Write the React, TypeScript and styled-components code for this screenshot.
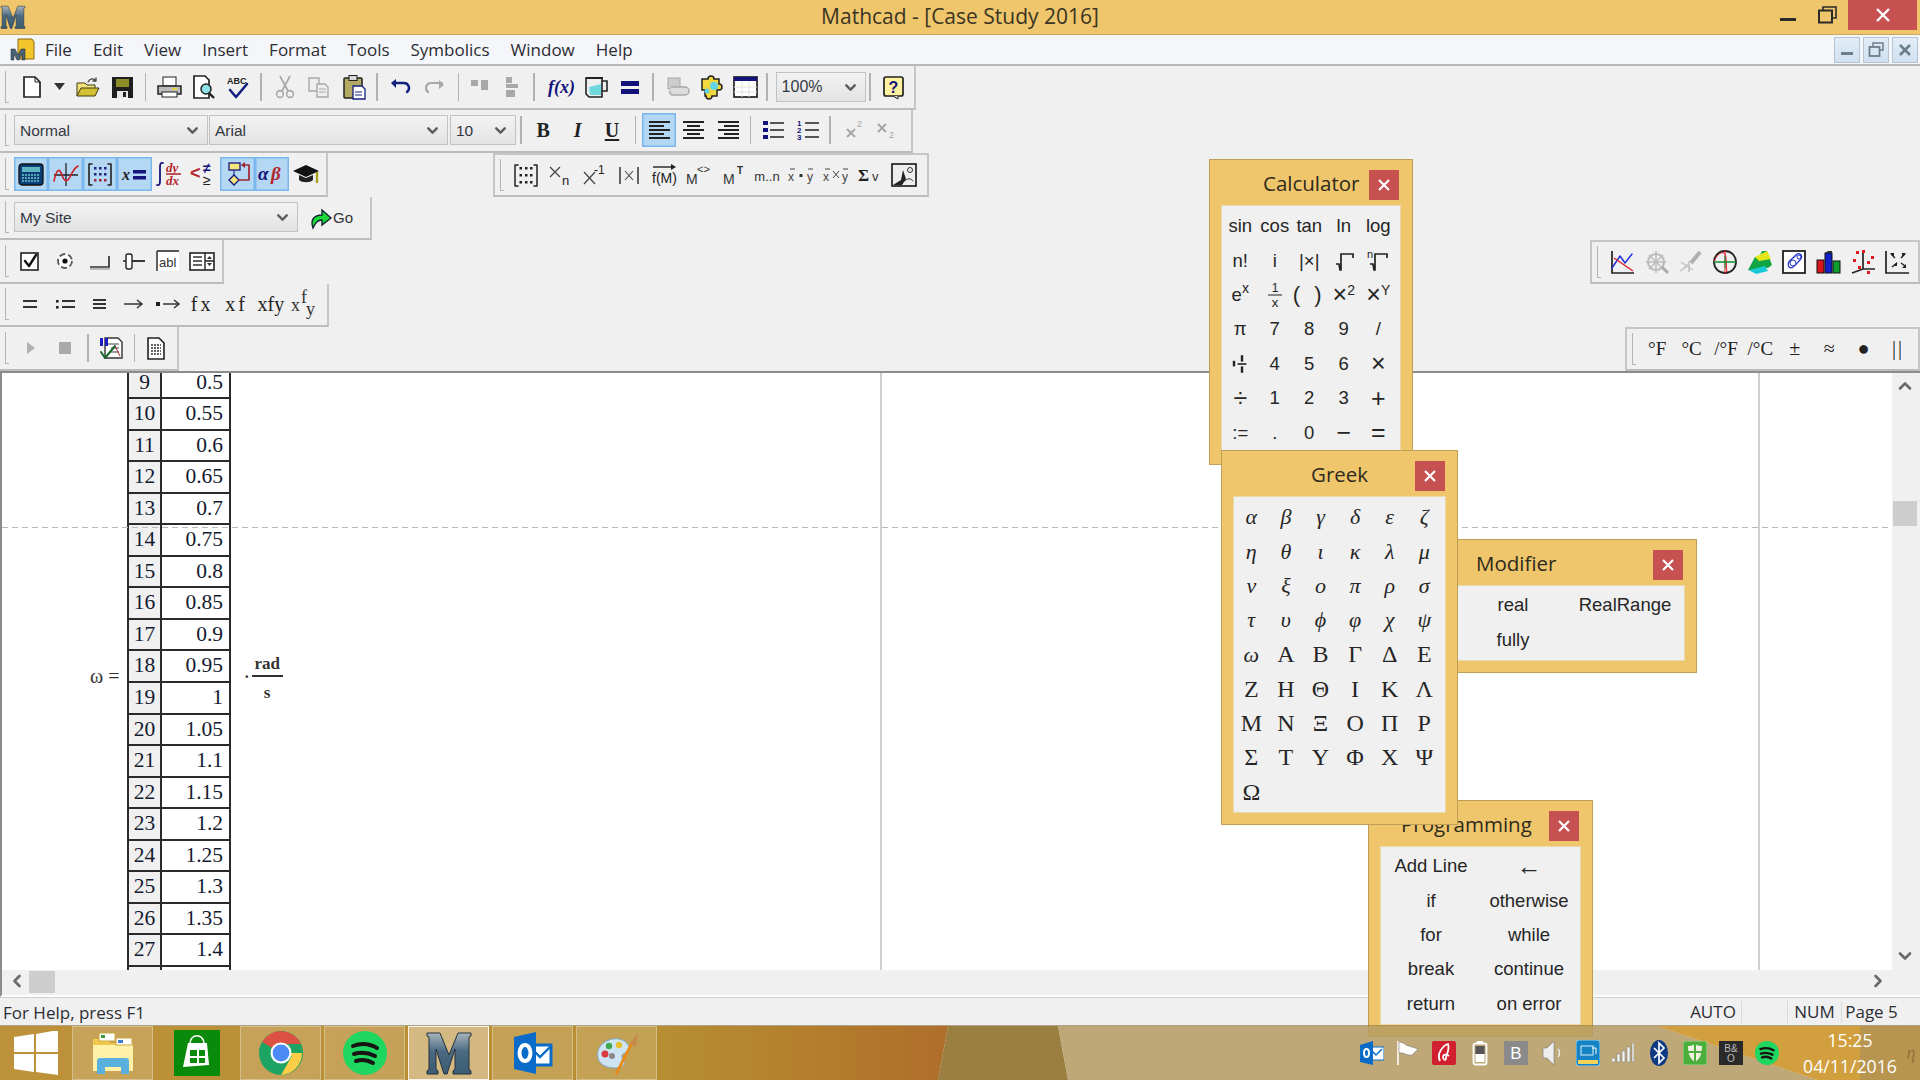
import React from "react";
import styled, { createGlobalStyle } from "styled-components";
import { ChevronDown, ChevronUp, ChevronLeft, ChevronRight } from "lucide-react";

const Global = createGlobalStyle`
  html, body { margin: 0; padding: 0; width: 1920px; height: 1080px; overflow: hidden; background: #f0f0f0; }
  #root { width: 1920px; height: 1080px; }
  * { box-sizing: border-box; }
`;

const UI = `"Open Sans", "Noto Sans", sans-serif`;
const SANS = `"Liberation Sans", Arial, sans-serif`;
const SERIF = `"Liberation Serif", "Times New Roman", serif`;

const Desktop = styled.div`
  position: relative; width: 1920px; height: 1080px; display: flex; flex-direction: column;
  background: #f0f0f0; overflow: hidden; font-family: ${SANS}; color: #222;
`;
const TitleBar = styled.header`
  height: 35px; flex: none; display: flex; align-items: center; justify-content: space-between;
  background: #efc66b; border-bottom: 1px solid #c9a75a; position: relative;
`;
const TitleText = styled.div`
  position: absolute; left: 0; right: 0; top: 2px; text-align: center; font: 21px ${UI}; color: #3a3424;
`;
const WinControls = styled.div`display: flex; align-items: flex-start; height: 100%; margin-left: auto; position: relative; padding-right: 3px;`;
const WinBtn = styled.div<{ $w: number; $red?: boolean }>`
  width: ${p => p.$w}px; height: 30px; display: flex; align-items: center; justify-content: center;
  background: ${p => (p.$red ? "#c75050" : "transparent")};
`;
const MenuBar = styled.nav`
  height: 31px; flex: none; display: flex; align-items: center; background: #f5f6f9; border-bottom: 2px solid #b8b8b8;
  padding-left: 10px; font: 17px ${UI}; color: #2c2c34;
`;
const MenuItems = styled.div`display: flex; gap: 21px; margin-left: 10px;`;
const MdiGroup = styled.div`display: flex; gap: 3px; margin-left: auto; margin-right: 2px;`;
const MdiBtn = styled.div`
  width: 26px; height: 26px; display: flex; align-items: center; justify-content: center;
  background: linear-gradient(#e3edf7, #cfe0f0); border: 1px solid #b5c4d2;
`;
const Row = styled.div`display: flex; height: 43.5px; flex: none;`;
const Toolbar = styled.div<{ $w: number; $boxed?: boolean; $ml?: string }>`
  display: flex; align-items: center; height: 100%; width: ${p => p.$w}px; flex: none;
  margin-left: ${p => p.$ml || "0"};
  border-right: 2px solid #c6c6c6; border-bottom: 2px solid #bcbcbc;
  ${p => (p.$boxed ? "border-top: 2px solid #c6c6c6; border-left: 2px solid #c6c6c6;" : "")}
`;
const Gripper = styled.span`
  width: 4px; height: 32px; flex: none; margin: 0 4px 0 5px; border-left: 1.5px solid #b4b4b4; border-bottom: 1.5px solid #b4b4b4;
`;
const Btn = styled.div<{ $w?: number; $on?: boolean; $ml?: number }>`
  width: ${p => p.$w ?? 34.4}px; height: 34px; flex: none; display: flex; align-items: center; justify-content: center;
  margin-left: ${p => p.$ml ?? 0}px;
  background: ${p => (p.$on ? "#b4d7f4" : "transparent")};
  box-shadow: ${p => (p.$on ? "inset 0 0 0 1.5px #79b7ee" : "none")};
`;
const Sep = styled.span<{ $w?: number }>`
  width: ${p => p.$w ?? 12.6}px; height: 28px; flex: none; display: flex; justify-content: center;
  &::after { content: ""; width: 1.5px; height: 100%; background: #b2b2b2; }
`;
const IconSvg = styled.svg`width: 28px; height: 28px; display: block; flex: none; overflow: visible;`;
const Combo = styled.div<{ $w: number; $ml?: number; $big?: boolean }>`
  width: ${p => p.$w}px; height: 30px; flex: none; margin-left: ${p => p.$ml ?? 0}px;
  display: flex; align-items: center; justify-content: space-between; padding: 1px 6px 0 5px;
  border: 1.5px solid #c2c2c2; background: linear-gradient(#f3f3f3, #e3e3e3);
  font: ${p => (p.$big ? 16 : 15.5)}px ${SANS}; color: #333842;
`;
const GoLabel = styled.span`font: 15px ${SANS}; color: #333; margin-left: -3px;`;
const SerifGlyph = styled.span<{ $b?: boolean; $i?: boolean; $s?: number; $ls?: number; $c?: string }>`
  font-family: ${SERIF}; font-size: ${p => p.$s ?? 19}px; font-weight: ${p => (p.$b ? 700 : 400)};
  font-style: ${p => (p.$i ? "italic" : "normal")}; letter-spacing: ${p => p.$ls ?? 0}px; color: ${p => p.$c ?? "#222"};
  white-space: pre;
`;
const UnderGlyph = styled(SerifGlyph)`text-decoration: underline; text-underline-offset: 2px;`;
const Workspace = styled.main`
  flex: 1; min-height: 0; display: flex; border-top: 2px solid #8c8c8c; border-left: 2px solid #8c8c8c; margin-top: 0;
`;
const Sheet = styled.div`flex: 1; position: relative; background: #fff; overflow: hidden;`;
const VScroll = styled.div`
  width: 28px; flex: none; background: #f0f0f0; display: flex; flex-direction: column; align-items: center; position: relative;
  color: #6b6b6b; padding: 3px 2px 4px 0;
`;
const VThumb = styled.div`width: 24px; height: 25px; background: #cdcdcd; margin-top: 105px;`;
const Spacer = styled.div`flex: 1;`;
const PageLine = styled.div<{ $x: number }>`position: absolute; top: 0; bottom: 0; left: ${p => p.$x}px; width: 2px; background: #cfcfcf;`;
const BreakLine = styled.div`
  position: absolute; left: 0; right: 0; top: 154px; height: 1px; z-index: 2;
  background: repeating-linear-gradient(90deg, #b9b9b9 0 6px, transparent 6px 10px);
`;
const Table = styled.div`
  position: absolute; left: 125px; top: -5px; display: grid; grid-template-columns: 33px 69px; grid-auto-rows: 31.55px;
  font: 21.5px ${SERIF}; color: #141a30; border-left: 2px solid #2b2b2b;
`;
const NumCell = styled.div`
  background: #f0f0f0; border-right: 2px solid #2b2b2b; border-bottom: 2px solid #2b2b2b; text-align: center; line-height: 29px;
`;
const ValCell = styled.div`
  background: #fff; border-right: 2px solid #2b2b2b; border-bottom: 2px solid #2b2b2b; text-align: right; padding-right: 6px; line-height: 29px;
`;
const OmegaLabel = styled.div`position: absolute; left: 88px; top: 292px; font: 20px ${SERIF}; color: #333; white-space: pre;`;
const Unit = styled.div`
  position: absolute; left: 242px; top: 278px; display: flex; align-items: center; gap: 2px; font: bold 17px ${SERIF}; color: #333;
`;
const Frac = styled.div`display: flex; flex-direction: column; align-items: center; width: 31px;`;
const FracTop = styled.div`border-bottom: 2px solid #333; width: 100%; text-align: center; height: 26px; line-height: 26px; margin-bottom: 5px;`;
const FracBot = styled.div`height: 22px; line-height: 22px;`;
const HScroll = styled.div`
  height: 27px; flex: none; background: #f0f0f0; border-left: 2px solid #8c8c8c; display: flex; align-items: flex-start; color: #6b6b6b; padding: 1px 32px 0 5px;
  border-bottom: 2px solid #fff; box-shadow: 0 1px 0 #d0d0d0;
`;
const HThumb = styled.div`width: 26px; height: 22px; background: #cdcdcd; margin-left: 2px; margin-top: 0;`;
const StatusBar = styled.footer`
  height: 28px; flex: none; display: flex; align-items: center; padding: 2px 19px 0 3px; font: 17px ${UI}; color: #2d2d35;
`;
const StatusCell = styled.div<{ $w: number; $first?: boolean }>`
  width: ${p => p.$w}px; height: 22px; line-height: 22px; text-align: center; border-left: ${p => (p.$first ? "none" : "1.5px solid #d8d8d8")};
  ${p => (p.$first ? "margin-left: auto;" : "")}
`;
const Taskbar = styled.footer`
  height: 55px; flex: none; position: relative; z-index: 10; display: flex; align-items: stretch; border-top: 1px solid rgba(120, 100, 50, 0.55);
`;
const Wallpaper = styled.svg`position: absolute; inset: 0; width: 100%; height: 100%; z-index: -1;`;
const StartCell = styled.div`width: 72px; flex: none; display: flex; align-items: center; justify-content: center;`;
const TaskButtons = styled.div`display: flex; gap: 3px; flex: none;`;
const TaskBtn = styled.div<{ $state?: "on" | "plain" | "active" }>`
  width: 81px; display: flex; align-items: center; justify-content: center;
  background: ${p => (p.$state === "active" ? "rgba(255,255,255,.38)" : p.$state === "plain" ? "transparent" : "rgba(255,255,255,.17)")};
  border: 1px solid ${p => (p.$state === "active" ? "rgba(255,255,255,.85)" : p.$state === "plain" ? "transparent" : "rgba(255,255,255,.3)")};
`;
const Tray = styled.div`margin-left: auto; display: flex; align-items: center;`;
const TrayIcon = styled.div`width: 35.9px; display: flex; justify-content: center; align-items: center; flex: none;`;
const Clock = styled.div`
  width: 104px; margin-left: 13px; text-align: center; color: #fff; font: 17.7px/26px ${UI};
`;
const Ghost = styled.div`width: 18px; text-align: center; color: rgba(110,85,40,.55); font: italic 18px ${SERIF};`;
const Palette = styled.section<{ $x: number; $y: number; $w: number; $h: number; $z: number }>`
  position: absolute; left: ${p => p.$x}px; top: ${p => p.$y}px; width: ${p => p.$w}px; height: ${p => p.$h}px; z-index: ${p => p.$z};
  background: #efc66b; border: 1.5px solid #bf9f55; padding: 0 11px 11px 11px; display: flex; flex-direction: column;
`;
const PalHead = styled.div`height: 45px; flex: none; display: flex; align-items: flex-start;`;
const PalTitle = styled.div<{ $ml: number }>`
  margin-left: ${p => p.$ml}px; margin-top: 9px; font: 20.5px/28px ${UI}; color: #2e2a1d; white-space: nowrap;
`;
const PalClose = styled.div<{ $mr: number }>`
  width: 30px; height: 30px; background: #c75050; margin-top: 10px; margin-left: auto; margin-right: ${p => p.$mr}px;
  display: flex; align-items: center; justify-content: center;
`;
const PalBody = styled.div<{ $cols: string; $pad: string; $end?: boolean }>`
  flex: 1; min-height: 0; background: #f0f0f0; border: 1px solid #e9d9ab; display: grid; grid-template-columns: ${p => p.$cols};
  grid-auto-rows: 34.4px; padding: ${p => p.$pad}; justify-content: ${p => (p.$end ? "end" : "start")}; overflow: hidden;
  font: 18.5px ${SANS}; color: #262626;
`;
const Cell = styled.div`display: flex; align-items: center; justify-content: center; white-space: nowrap;`;
const GreekLow = styled(Cell)`font: italic 22px ${SERIF};`;
const GreekUp = styled(Cell)`font: 24px ${SERIF};`;
const Sup = styled.sup`font-size: 14px; line-height: 0; vertical-align: 8px;`;
const Pair = styled.span`letter-spacing: 4px; font-size: 22px;`;
const BigOp = styled.span`font-size: 25px; line-height: 1;`;

const T: React.FC<{ x: number; y: number; s?: number; f?: string; c?: string; b?: boolean; i?: boolean; a?: string; children: React.ReactNode }> = ({ x, y, s = 12, f = SANS, c = "#333", b, i, a = "start", children }) => (
  <text x={x} y={y} fontSize={s} fontFamily={f} fill={c} fontWeight={b ? 700 : 400} fontStyle={i ? "italic" : "normal"} textAnchor={a as any}>{children}</text>
);

const DK = "#222", GY = "#a8a8a8", RD = "#b3262c";
const P = { fill: "none", strokeLinecap: "round" as const, strokeLinejoin: "round" as const };

const ICONS: Record<string, React.ReactNode> = {
  new: <><path d="M6 4h11l5 5v15H6z" fill="#fff" stroke={DK} strokeWidth="1.7" /><path d="M17 4v5h5" fill="none" stroke={DK} /></>,
  open: <><path d="M3 23V10h8l2 2h8v4" fill="#f6e27c" stroke="#3a3a10" /><path d="M3 23l4-8h18l-4 8z" fill="#d4c032" stroke="#3a3a10" /><path d="M14 9c2-4 6-4 8-1m0 0v-3m0 3h-3" {...P} stroke="#444" strokeWidth="1.3" /></>,
  save: <><rect x="4" y="4" width="21" height="21" fill="#1f1f1f" /><rect x="8" y="6" width="13" height="8" fill="#8e8e28" /><rect x="9" y="18" width="11" height="7" fill="#e8e8e8" /><rect x="15" y="19" width="3" height="5" fill="#222" /></>,
  print: <><rect x="8" y="4" width="13" height="9" fill="#fff" stroke={DK} /><path d="M3 13h23v8H3z" fill="#bbb" stroke={DK} strokeWidth="1.5" /><rect x="7" y="19" width="15" height="5" fill="#fff" stroke={DK} /><rect x="17" y="15" width="5" height="2" fill="#e6d23a" /></>,
  preview: <><path d="M5 3h11l4 4v18H5z" fill="#fff" stroke={DK} strokeWidth="1.7" /><circle cx="17" cy="16" r="5" fill="#8fe3e8" stroke="#222" strokeWidth="1.5" /><path d="M20 20l5 5" stroke="#222" strokeWidth="2.4" /></>,
  spell: <><T x={3} y={11} s={9} b c="#222">ABC</T><path d="M6 17l6 7 11-13" {...P} stroke="#15207e" strokeWidth="2.6" /></>,
  cut: <><path d="M9 3l8 15M19 3l-8 15" stroke={GY} strokeWidth="1.7" /><circle cx="9" cy="21" r="3.4" fill="none" stroke={GY} strokeWidth="1.6" /><circle cx="19" cy="21" r="3.4" fill="none" stroke={GY} strokeWidth="1.6" /></>,
  copy: <><path d="M4 5h10v13H4z" fill="#eee" stroke={GY} strokeWidth="1.4" /><path d="M12 11h8l3 3v10H12z" fill="#eee" stroke={GY} strokeWidth="1.4" /><path d="M14 16h7M14 19h7" stroke={GY} /></>,
  paste: <><rect x="4" y="5" width="18" height="20" rx="1" fill="#b3ab63" stroke={DK} strokeWidth="1.5" /><rect x="9" y="2.5" width="8" height="5" fill="#d8d8d8" stroke={DK} /><path d="M13 13h9l3 3v10H13z" fill="#fff" stroke="#15207e" strokeWidth="1.3" /><path d="M15 19h7M15 22h7" stroke="#15207e" /></>,
  undo: <><path d="M7 10h11a5 5 0 0 1 3 9" {...P} stroke="#14207e" strokeWidth="2.4" /><path d="M10 6l-5 4 5 5z" fill="#14207e" /></>,
  redo: <><path d="M21 10H10a5 5 0 0 0-3 9" {...P} stroke={GY} strokeWidth="2.2" /><path d="M18 7l5 5-5 4z" fill={GY} /></>,
  atop: <><rect x="4" y="7" width="7" height="6" fill={GY} /><rect x="14" y="7" width="7" height="10" fill={GY} /></>,
  abot: <><rect x="9" y="4" width="6" height="6" fill={GY} /><rect x="9" y="11" width="12" height="4" fill={GY} /><rect x="9" y="17" width="9" height="7" fill={GY} /></>,
  fx: <T x={1} y={20} s={18} f={SERIF} b i c="#12127a">f(x)</T>,
  unit: <><path d="M5 5h16v19H8l-3-3z" fill="#eee" stroke={DK} strokeWidth="1.6" /><path d="M21 8h5v10h-5" fill="none" stroke={DK} strokeWidth="1.6" /><path d="M8 14l12-3v11H9z" fill="#6fd8dc" /><path d="M5 5h17" stroke={DK} strokeWidth="2" /></>,
  eq: <><rect x="5" y="8" width="18" height="5" fill="#12127a" /><rect x="5" y="16" width="18" height="5" fill="#12127a" /></>,
  comp: <><rect x="5" y="5" width="12" height="11" fill="#ccc" stroke={GY} /><path d="M8 14h14a3 3 0 0 1 0 8H10a3 3 0 0 1-3-4" fill="#ddd" stroke={GY} strokeWidth="1.5" /></>,
  puzzle: <><path d="M5 6h6a3 3 0 0 1 6 0h5v5a3 3 0 0 1 0 6h-2v6h-5a3 3 0 0 1-6 0H8v-6H5z" fill="#f2d83d" stroke={DK} strokeWidth="1.5" /><circle cx="17" cy="13" r="4" fill="#62d6e8" /><circle cx="10" cy="18" r="2.5" fill="#5fd0e0" /></>,
  cal: <><rect x="3" y="4" width="23" height="20" fill="#fff" stroke={DK} strokeWidth="1.7" /><rect x="3" y="4" width="23" height="4" fill="#12127a" /><path d="M3 14h23M3 19h23M11 8v16M18 8v16" stroke="#e2e2e2" /></>,
  help: <><rect x="5" y="4" width="19" height="19" rx="2" fill="#fff3a0" stroke={DK} strokeWidth="1.7" /><T x={14.5} y={20} s={16} b c="#12127a" a="middle">?</T><path d="M14 23l5 3v-3" fill="#ddd" stroke={DK} /></>,
  alL: <path d="M4 6h21M4 10h15M4 14h21M4 18h15M4 22h21" stroke={DK} strokeWidth="1.8" />,
  alC: <path d="M4 6h21M8 10h13M4 14h21M8 18h13M4 22h21" stroke={DK} strokeWidth="1.8" />,
  alR: <path d="M4 6h21M10 10h15M4 14h21M10 18h15M4 22h21" stroke={DK} strokeWidth="1.8" />,
  bul: <><rect x="4" y="5" width="5" height="4" fill="#12127a" /><rect x="4" y="12" width="5" height="4" fill="#12127a" /><rect x="4" y="19" width="5" height="4" fill="#12127a" /><path d="M11 7h14M11 14h14M11 21h14" stroke={DK} strokeWidth="1.5" /></>,
  num: <><T x={3} y={10} s={8} b c="#12127a">1</T><T x={3} y={17} s={8} b c="#12127a">2</T><T x={3} y={24} s={8} b c="#12127a">3</T><path d="M11 7h14M11 14h14M11 21h14" stroke={DK} strokeWidth="1.5" /></>,
  sup: <><path d="M8 13l8 8M16 13l-8 8" stroke={GY} strokeWidth="2" /><T x={18} y={11} s={9} c={GY}>2</T></>,
  sub: <><path d="M5 8l8 8M13 8l-8 8" stroke={GY} strokeWidth="2" /><T x={16} y={22} s={9} c={GY}>2</T></>,
  calc: <><rect x="2" y="4" width="24" height="21" rx="3" fill="#0c3f77" stroke="#111" strokeWidth="1.3" /><rect x="5" y="7" width="18" height="5" fill="#5fb8bf" /><path d="M5 15h18M5 18h18M5 21h18" stroke="#6fc6c9" strokeWidth="1.6" strokeDasharray="2 1" /></>,
  graph: <><path d="M14 3v23M2 15h24" stroke="#222" strokeWidth="1.3" /><path d="M2 21c3-14 6-12 8-6s5 8 8 2 4-9 8-11" {...P} stroke="#d01f28" strokeWidth="1.6" /></>,
  matrix: <><path d="M6 4H3v21h3M22 4h3v21h-3" {...P} stroke="#222" strokeWidth="1.6" /><g fill="#23237f"><rect x="8" y="7" width="2.5" height="2.5" /><rect x="13" y="7" width="2.5" height="2.5" /><rect x="18" y="7" width="2.5" height="2.5" /><rect x="8" y="13" width="2.5" height="2.5" /><rect x="13" y="13" width="2.5" height="2.5" /><rect x="18" y="13" width="2.5" height="2.5" /></g><g fill="#a02632"><rect x="8" y="19" width="2.5" height="2.5" /><rect x="13" y="19" width="2.5" height="2.5" /><rect x="18" y="19" width="2.5" height="2.5" /></g></>,
  evalx: <><T x={2} y={20} s={16} f={SERIF} b i c="#222">x</T><rect x="13" y="10" width="13" height="3.5" fill="#14147a" /><rect x="13" y="16" width="13" height="3.5" fill="#14147a" /></>,
  calculus: <><path d="M8 3c-3-1-3 2-3 5v12c0 3 0 6-3 5" {...P} stroke="#14147a" strokeWidth="1.8" /><T x={11} y={12} s={13} f={SERIF} i b c={RD}>dy</T><path d="M11 14h15" stroke={RD} strokeWidth="1.5" /><T x={11} y={25} s={13} f={SERIF} i b c={RD}>dx</T></>,
  bool: <><T x={1} y={19} s={18} b c={RD}>&lt;</T><T x={14} y={13} s={14} b c="#14147a">≠</T><T x={14} y={25} s={14} c="#222">≥</T></>,
  prog: <><rect x="5" y="3" width="11" height="7" fill="#f5e67a" stroke="#14147a" strokeWidth="1.3" /><path d="M10 10v5" stroke="#14147a" /><path d="M10 15l5 5-5 5-5-5z" fill="#f5e67a" stroke="#14147a" strokeWidth="1.3" /><path d="M15 20h10V5h-6" {...P} stroke="#a02632" strokeWidth="1.7" /><path d="M21 2l-4 3 4 3z" fill="#a02632" /></>,
  greek: <><T x={0} y={20} s={19} f={SERIF} b i c="#14147a">α</T><T x={13} y={20} s={19} f={SERIF} b i c="#b3262c">β</T></>,
  cap: <><path d="M1 11l13-6 13 6-13 6z" fill="#111" /><path d="M7 15v5c3 3 11 3 14 0v-5l-7 3z" fill="#222" /><path d="M25 12v11" stroke="#aaa01e" strokeWidth="2.4" /></>,
  dots: <><path d="M6 4H3v21h3M22 4h3v21h-3" {...P} stroke="#222" strokeWidth="1.5" /><g fill="#222"><rect x="7.5" y="6" width="2.5" height="2.5" /><rect x="13" y="6" width="2.5" height="2.5" /><rect x="18" y="6" width="2.5" height="2.5" /><rect x="7.5" y="13" width="2.5" height="2.5" /><rect x="13" y="13" width="2.5" height="2.5" /><rect x="18" y="13" width="2.5" height="2.5" /><rect x="7.5" y="20" width="2.5" height="2.5" /><rect x="13" y="20" width="2.5" height="2.5" /><rect x="18" y="20" width="2.5" height="2.5" /></g></>,
  xn: <><path d="M3 6l10 10M13 6L3 16" stroke="#444" strokeWidth="1.2" /><T x={15} y={24} s={13} c="#222">n</T></>,
  xinv: <><path d="M3 11l11 12M14 11L3 23" stroke="#444" strokeWidth="1.2" /><T x={13} y={13} s={12} c="#222">-1</T></>,
  absx: <><path d="M5 6v17M23 6v17" stroke="#333" strokeWidth="1.5" /><path d="M10 10l8 9M18 10l-8 9" stroke="#444" strokeWidth="1.1" /></>,
  vect: <><path d="M3 6h21" stroke="#222" strokeWidth="1.4" /><path d="M21 3l5 3-5 3z" fill="#222" /><T x={2} y={22} s={14} c="#222">f(M)</T></>,
  mang: <><T x={2} y={23} s={14} c="#333">M</T><T x={13} y={12} s={11} c="#333">&lt;&gt;</T></>,
  mt: <><T x={4} y={23} s={14} c="#333">M</T><T x={18} y={13} s={10} b c="#333">T</T></>,
  mn: <T x={14} y={20} s={13} c="#333" a="middle">m..n</T>,
  dot: <><T x={1} y={20} s={12} c="#444">x</T><path d="M3 8h5" stroke="#444" /><rect x="12.5" y="13" width="3" height="3" fill="#333" /><T x={20} y={20} s={12} c="#444">y</T><path d="M21 8h5" stroke="#444" /></>,
  cross: <><T x={1} y={20} s={12} c="#444">x</T><path d="M3 8h5" stroke="#444" /><path d="M11 10l6 7M17 10l-6 7" stroke="#444" /><T x={20} y={20} s={12} c="#444">y</T><path d="M21 8h5" stroke="#444" /></>,
  sumv: <><T x={2} y={20} s={17} f={SERIF} b c="#222">Σ</T><T x={16} y={20} s={13} c="#333">v</T></>,
  pic: <><rect x="2" y="3" width="24" height="22" fill="#eee" stroke="#222" strokeWidth="1.7" /><path d="M3 24l8-5 2-10 3 9-4 6z" fill="#222" /><circle cx="20" cy="9" r="2.5" fill="none" stroke="#333" /><path d="M15 20c2-3 6-3 8 0" {...P} stroke="#333" /></>,
  check: <><rect x="5" y="6" width="17" height="17" fill="#fff" stroke="#222" strokeWidth="1.6" /><path d="M9 14l4 5 7-11" {...P} stroke="#111" strokeWidth="2.4" /></>,
  radio: <><circle cx="14" cy="14" r="7" fill="#fff" stroke="#555" strokeDasharray="6 3" strokeWidth="1.8" /><circle cx="14" cy="14" r="2.6" fill="#111" /></>,
  button: <><path d="M5 20h19V9" fill="none" stroke="#333" strokeWidth="1.7" /><path d="M5 22h20" stroke="#888" /></>,
  slider: <><path d="M11 14h15" stroke="#222" strokeWidth="1.8" /><rect x="7" y="7" width="6" height="15" rx="2" fill="#fff" stroke="#222" strokeWidth="1.4" /><path d="M4 14h3" stroke="#222" strokeWidth="1.5" /></>,
  textbox: <><rect x="3" y="4" width="22" height="20" fill="#fff" /><path d="M3 4h22M3 4v20" stroke="#222" strokeWidth="1.4" /><T x={5} y={20} s={13} c="#333">abl</T></>,
  list: <><rect x="2" y="6" width="24" height="17" fill="#fff" stroke="#222" strokeWidth="1.6" /><path d="M5 10h9M5 14h9M5 18h9" stroke="#333" strokeWidth="1.5" /><path d="M17 6v17M17 14h9" stroke="#222" strokeWidth="1.4" /><path d="M19 12l2.5-3 2.5 3zM19 16l2.5 3 2.5-3z" fill="#333" /></>,
  eq2: <path d="M7 11h14M7 17h14" stroke="#333" strokeWidth="2" />,
  assign: <><path d="M11 11h13M11 17h13" stroke="#333" strokeWidth="2" /><rect x="5" y="10" width="2.6" height="2.6" fill="#222" /><rect x="5" y="16" width="2.6" height="2.6" fill="#222" /></>,
  equiv: <path d="M8 10h13M8 14h13M8 18h13" stroke="#333" strokeWidth="1.8" />,
  arrow: <><path d="M5 14h17" stroke="#333" strokeWidth="1.5" /><path d="M18 10l5 4-5 4" fill="none" stroke="#333" strokeWidth="1.5" /></>,
  darrow: <><rect x="2" y="12" width="4" height="4" fill="#222" /><path d="M9 14h15" stroke="#333" strokeWidth="1.5" /><path d="M20 10l5 4-5 4" fill="none" stroke="#333" strokeWidth="1.5" /></>,
  xfysup: <><T x={0} y={21} s={18} f={SERIF} c="#333">x</T><T x={10} y={13} s={18} f={SERIF} c="#333">f</T><T x={15} y={25} s={18} f={SERIF} c="#333">y</T></>,
  play: <path d="M11 8l8 6-8 6z" fill="#b0b0b0" />,
  stop: <rect x="8" y="8" width="12" height="12" fill="#a9a9a9" />,
  checkdoc: <><path d="M8 4h13l4 4v16H8z" fill="#fff" stroke="#333" strokeWidth="1.4" /><path d="M11 10h11M14 14h8M14 18h8" stroke="#444" /><rect x="3" y="4" width="3" height="8" fill="#1c1cc0" /><rect x="8" y="4" width="3" height="8" fill="#1c1cc0" /><path d="M4 18l4 6 10-12" {...P} stroke="#146a2e" strokeWidth="2" /><path d="M18 12l5 10" stroke="#b3262c" /></>,
  doc: <><path d="M6 4h11l5 5v16H6z" fill="#fff" stroke="#222" strokeWidth="1.6" /><path d="M9 11h10M9 14h10M9 17h10M9 20h10" stroke="#333" strokeWidth="1.4" strokeDasharray="2 1" /></>,
  g2d: <><path d="M4 3v22h22" fill="none" stroke="#222" strokeWidth="1.7" /><path d="M4 20l8-12 5 7 7-9" {...P} stroke="#1c2cd8" strokeWidth="1.4" /><path d="M6 10l19 13" stroke="#dd1f2a" strokeWidth="1.4" /></>,
  gpolar: <><circle cx="13" cy="14" r="8" fill="none" stroke="#bcbcbc" strokeWidth="2.2" /><path d="M3 14h20M13 3v22M6 7l14 14M20 7L6 21" stroke="#bcbcbc" strokeWidth="1.5" /><path d="M19 19l6 6" stroke="#aaa" strokeWidth="3" /></>,
  gsurf: <><path d="M3 23l9-6M12 24V13M4 14l12 8" stroke="#c0c0c0" strokeWidth="1.5" /><path d="M14 15l9-11" stroke="#b0b0b0" strokeWidth="4" /><path d="M6 20l5-4 3 5" fill="none" stroke="#ccc" /></>,
  gcirc: <><circle cx="14" cy="14" r="11" fill="none" stroke="#222" strokeWidth="1.8" /><path d="M3 14c3-9 9-11 11-8s1 14 2 18" fill="none" stroke="#dd1f2a" /><path d="M14 2v24" stroke="#dd1f2a" /><path d="M3 14h22" stroke="#0d8f2e" strokeWidth="1.5" /><path d="M14 8v12" stroke="#0d8f2e" /></>,
  g3d: <><path d="M2 22l7-13h4l3-6h5l5 14-4 3-6-1-3 5z" fill="#10a544" /><path d="M9 9l12-6 4 8-12 2z" fill="#e6e61e" /><path d="M3 22l16-4 3 5-12 3z" fill="#18c9d6" /></>,
  gcont: <><rect x="3" y="3" width="22" height="22" fill="#fff" stroke="#222" strokeWidth="1.8" /><path d="M9 19c-3-6 4-8 7-12s8 1 4 5-8 10-11 7z" fill="none" stroke="#2233c8" strokeWidth="1.3" /><circle cx="13" cy="15" r="3" fill="none" stroke="#2233c8" /><circle cx="19" cy="9" r="2" fill="none" stroke="#2233c8" /></>,
  gbar: <><rect x="2" y="12" width="7" height="13" fill="#d8151c" stroke="#111" /><rect x="10" y="5" width="7" height="20" fill="#1420c8" stroke="#111" /><rect x="18" y="13" width="7" height="12" fill="#0f9e2e" stroke="#111" /><path d="M10 5l3-2 4 0v2" fill="#333" /></>,
  gscat: <><path d="M14 4v17M3 25l11-4h12" fill="none" stroke="#222" strokeWidth="1.7" /><g fill="#e21622"><rect x="7" y="3" width="3" height="3" /><rect x="13" y="2" width="3" height="3" /><rect x="22" y="8" width="3" height="3" /><rect x="4" y="11" width="3" height="3" /><rect x="18" y="13" width="3" height="3" /><rect x="9" y="18" width="3" height="3" /><rect x="18" y="23" width="3" height="3" /></g></>,
  gvec: <><path d="M3 3v22h23" fill="none" stroke="#222" strokeWidth="1.7" /><path d="M8 6l4 4M22 6l-4 4M9 19l5-4M22 18l-4-3" stroke="#222" strokeWidth="1.4" /><path d="M7 5h4v4zM23 5h-4v4zM14 14v4h-4zM23 20h-4l4-4z" fill="#222" /></>,
};

const Ic: React.FC<{ n: string }> = ({ n }) => <IconSvg viewBox="0 0 28 28">{ICONS[n]}</IconSvg>;
const Tool: React.FC<{ n: string; on?: boolean; w?: number; ml?: number }> = ({ n, on, w, ml }) => (
  <Btn $on={on} $w={w} $ml={ml}><Ic n={n} /></Btn>
);
const Chev: React.FC = () => <ChevronDown size={17} strokeWidth={3.4} color="#5d5d5d" />;

const MLogo: React.FC<{ w: number; h: number }> = ({ w, h }) => (
  <svg width={w} height={h} viewBox="0 0 48 48">
    <defs><linearGradient id={`m${w}`} x1="0" y1="0" x2="0" y2="1"><stop offset="0" stopColor="#a9b4bc" /><stop offset=".45" stopColor="#4a6a82" /><stop offset="1" stopColor="#3c5c74" /></linearGradient></defs>
    <path d="M2 4h13l9 22 9-22h13v3l-2 1v32l2 2v3H28v-3l2-2V20l-8 25h-3l-8-25v20l2 2v3H2v-3l2-2V8L2 7z" fill={`url(#m${w})`} stroke="#24313c" strokeWidth="1" />
  </svg>
);

const CloseX: React.FC = () => (
  <svg width="14" height="14" viewBox="0 0 14 14"><path d="M2 2l10 10M12 2L2 12" stroke="#fff" strokeWidth="2.2" /></svg>
);
const Radical: React.FC<{ n?: boolean }> = ({ n }) => (
  <svg width="22" height="24" viewBox="0 0 22 24">
    {n && <text x="0" y="9" fontSize="11" fontFamily={SANS} fill="#222">n</text>}
    <path d="M3 15h3l1 6 1-0V5h12v4" fill="none" stroke="#222" strokeWidth="1.7" />
  </svg>
);
const Mixed: React.FC = () => (
  <svg width="16" height="22" viewBox="0 0 20 26"><rect x="1" y="9" width="3" height="7" fill="#222" /><rect x="11" y="2" width="3" height="8" fill="#222" /><rect x="7" y="12" width="11" height="2" fill="#222" /><rect x="11" y="16" width="3" height="8" fill="#222" /></svg>
);
const OneOverX: React.FC = () => (
  <svg width="18" height="28" viewBox="0 0 18 28"><text x="9" y="11" textAnchor="middle" fontSize="12" fontFamily={SANS} fill="#222">1</text><path d="M2 14h14" stroke="#222" /><text x="9" y="26" textAnchor="middle" fontSize="13" fontFamily={SANS} fill="#222">x</text></svg>
);

const Tw: React.FC<{ children: React.ReactNode; w?: number; h?: number; vb?: string }> = ({ children, w = 44, h = 44, vb = "0 0 44 44" }) => (
  <svg width={w} height={h} viewBox={vb}>{children}</svg>
);

const calcCells: React.ReactNode[] = [
  "sin", "cos", "tan", "ln", "log",
  "n!", "i", "|×|", <Radical />, <Radical n />,
  <span>e<Sup>x</Sup></span>, <OneOverX />, <Pair>( )</Pair>, <span><BigOp>×</BigOp><Sup>2</Sup></span>, <span><BigOp>×</BigOp><Sup>Y</Sup></span>,
  "π", "7", "8", "9", "/",
  <Mixed />, "4", "5", "6", <BigOp>×</BigOp>,
  <BigOp>÷</BigOp>, "1", "2", "3", <BigOp>+</BigOp>,
  ":=", ".", "0", <BigOp>−</BigOp>, <BigOp>=</BigOp>,
];
const greekLow = "α β γ δ ε ζ η θ ι κ λ μ ν ξ ο π ρ σ τ υ ϕ φ χ ψ ω".split(" ");
const greekUp = "Α Β Γ Δ Ε Ζ Η Θ Ι Κ Λ Μ Ν Ξ Ο Π Ρ Σ Τ Υ Φ Χ Ψ Ω".split(" ");
const progCells: React.ReactNode[] = ["Add Line", <BigOp>←</BigOp>, "if", "otherwise", "for", "while", "break", "continue", "return", "on error"];
const rows: [number, string][] = [[9,"0.5"],[10,"0.55"],[11,"0.6"],[12,"0.65"],[13,"0.7"],[14,"0.75"],[15,"0.8"],[16,"0.85"],[17,"0.9"],[18,"0.95"],[19,"1"],[20,"1.05"],[21,"1.1"],[22,"1.15"],[23,"1.2"],[24,"1.25"],[25,"1.3"],[26,"1.35"],[27,"1.4"]];

export default function App() {
  return (
    <Desktop>
      <Global />
      <TitleBar>
        <TitleText>Mathcad - [Case Study 2016]</TitleText>
        <MLogo w={26} h={26} />
        <WinControls>
          <WinBtn $w={36}><svg width="16" height="16"><rect y="11" width="16" height="3" fill="#2b2b2b" /></svg></WinBtn>
          <WinBtn $w={42}><svg width="19" height="18" viewBox="0 0 19 18"><path d="M5 4V1h13v11h-3" fill="none" stroke="#2b2b2b" strokeWidth="1.6" /><rect x="1" y="4.5" width="13" height="12" fill="none" stroke="#2b2b2b" strokeWidth="2" /></svg></WinBtn>
          <WinBtn $w={69} $red><svg width="16" height="16" viewBox="0 0 16 16"><path d="M2 2l12 12M14 2L2 14" stroke="#fff" strokeWidth="2.4" /></svg></WinBtn>
        </WinControls>
      </TitleBar>
      <MenuBar>
        <svg width="25" height="26" viewBox="0 0 25 26"><path d="M8 2h14l2 3v17H8z" fill="#f2c52c" stroke="#8a6a12" /><path d="M1 12h4l3 6 3-6h4v11h-3v-6l-3 6H7l-3-6v6H1z" fill="#4a6478" stroke="#222" strokeWidth=".5" /></svg>
        <MenuItems>{["File", "Edit", "View", "Insert", "Format", "Tools", "Symbolics", "Window", "Help"].map(m => <span key={m}>{m}</span>)}</MenuItems>
        <MdiGroup>
          <MdiBtn><svg width="14" height="14"><rect x="1" y="9" width="12" height="3" fill="#6c7d8c" /></svg></MdiBtn>
          <MdiBtn><svg width="16" height="16" viewBox="0 0 16 16"><path d="M5 4V1h10v7h-3" fill="none" stroke="#6c7d8c" strokeWidth="1.5" /><rect x="1.5" y="5" width="10" height="9" fill="none" stroke="#6c7d8c" strokeWidth="1.8" /></svg></MdiBtn>
          <MdiBtn><svg width="14" height="14" viewBox="0 0 14 14"><path d="M2 2l10 10M12 2L2 12" stroke="#6c7d8c" strokeWidth="2.6" /></svg></MdiBtn>
        </MdiGroup>
      </MenuBar>

      <Row>
        <Toolbar $w={916}>
          <Gripper />
          <Tool n="new" ml={2} />
          <Btn $w={21}><svg width="11" height="7"><path d="M0 0h11L5.5 7z" fill="#333" /></svg></Btn>
          <Tool n="open" /><Tool n="save" /><Sep />
          <Tool n="print" /><Tool n="preview" /><Tool n="spell" /><Sep />
          <Tool n="cut" /><Tool n="copy" /><Tool n="paste" /><Sep />
          <Tool n="undo" /><Tool n="redo" /><Sep />
          <Tool n="atop" w={32} /><Tool n="abot" w={28} /><Sep $w={19} />
          <Tool n="fx" /><Tool n="unit" /><Tool n="eq" /><Sep />
          <Tool n="comp" /><Tool n="puzzle" /><Tool n="cal" /><Sep $w={9} />
          <Combo $w={90} $ml={4} $big>100%<Chev /></Combo><Sep $w={9} />
          <Tool n="help" ml={1} />
        </Toolbar>
      </Row>
      <Row>
        <Toolbar $w={913}>
          <Gripper />
          <Combo $w={194} $ml={1}>Normal<Chev /></Combo>
          <Combo $w={239} $ml={1}>Arial<Chev /></Combo>
          <Combo $w={66} $ml={2}>10<Chev /></Combo>
          <Sep $w={10} />
          <Btn><SerifGlyph $b $s={20}>B</SerifGlyph></Btn>
          <Btn><SerifGlyph $b $i $s={20}>I</SerifGlyph></Btn>
          <Btn><UnderGlyph $b $s={20}>U</UnderGlyph></Btn>
          <Sep />
          <Tool n="alL" on /><Tool n="alC" /><Tool n="alR" /><Sep $w={11} />
          <Tool n="bul" /><Tool n="num" /><Sep $w={11} />
          <Tool n="sup" /><Tool n="sub" />
        </Toolbar>
      </Row>
      <Row>
        <Toolbar $w={328}>
          <Gripper />
          <Tool n="calc" on ml={1} /><Tool n="graph" on /><Tool n="matrix" on /><Tool n="evalx" on />
          <Tool n="calculus" /><Tool n="bool" /><Tool n="prog" on /><Tool n="greek" on /><Tool n="cap" />
        </Toolbar>
        <Toolbar $w={436} $boxed $ml="165px">
          <Gripper />
          <Tool n="dots" ml={1} /><Tool n="xn" /><Tool n="xinv" /><Tool n="absx" /><Tool n="vect" /><Tool n="mang" />
          <Tool n="mt" /><Tool n="mn" /><Tool n="dot" /><Tool n="cross" /><Tool n="sumv" /><Tool n="pic" />
        </Toolbar>
      </Row>
      <Row>
        <Toolbar $w={372}>
          <Gripper />
          <Combo $w={284} $ml={1}>My Site<Chev /></Combo>
          <Btn $w={30} $ml={8}><svg width="26" height="26" viewBox="0 0 26 26"><path d="M5 24c-3-8 1-13 9-13V6l9 8-9 7v-5c-4 0-6 2-9 8z" fill="#18d83a" stroke="#123" strokeWidth="1.4" /></svg></Btn>
          <GoLabel>Go</GoLabel>
        </Toolbar>
      </Row>
      <Row>
        <Toolbar $w={224}>
          <Gripper />
          <Tool n="check" /><Tool n="radio" /><Tool n="button" /><Tool n="slider" /><Tool n="textbox" /><Tool n="list" />
        </Toolbar>
        <Toolbar $w={330} $boxed $ml="auto">
          <Gripper />
          <Tool n="g2d" /><Tool n="gpolar" /><Tool n="gsurf" /><Tool n="gcirc" /><Tool n="g3d" /><Tool n="gcont" /><Tool n="gbar" /><Tool n="gscat" /><Tool n="gvec" />
        </Toolbar>
      </Row>
      <Row>
        <Toolbar $w={329}>
          <Gripper />
          <Tool n="eq2" /><Tool n="assign" /><Tool n="equiv" /><Tool n="arrow" /><Tool n="darrow" />
          <Btn><SerifGlyph $ls={3} $s={20}>fx</SerifGlyph></Btn>
          <Btn><SerifGlyph $ls={3} $s={20}>xf</SerifGlyph></Btn>
          <Btn><SerifGlyph $s={20}>xfy</SerifGlyph></Btn>
          <Tool n="xfysup" />
        </Toolbar>
      </Row>
      <Row>
        <Toolbar $w={179}>
          <Gripper />
          <Tool n="play" /><Tool n="stop" /><Sep /><Tool n="checkdoc" w={34} /><Sep $w={12} /><Tool n="doc" w={32} />
        </Toolbar>
        <Toolbar $w={295} $boxed $ml="auto">
          <Gripper />
          <Btn><SerifGlyph $s={19}>°F</SerifGlyph></Btn>
          <Btn><SerifGlyph $s={19}>°C</SerifGlyph></Btn>
          <Btn><SerifGlyph $s={19}>/°F</SerifGlyph></Btn>
          <Btn><SerifGlyph $s={19}>/°C</SerifGlyph></Btn>
          <Btn><SerifGlyph $s={20}>±</SerifGlyph></Btn>
          <Btn><SerifGlyph $s={20}>≈</SerifGlyph></Btn>
          <Btn><SerifGlyph $s={20}>●</SerifGlyph></Btn>
          <Btn><SerifGlyph $s={20} $ls={2}>||</SerifGlyph></Btn>
        </Toolbar>
      </Row>

      <Workspace>
        <Sheet>
          <PageLine $x={878} />
          <PageLine $x={1756} />
          <Table>
            {rows.map(([n, v]) => (
              <React.Fragment key={n}><NumCell>{n}</NumCell><ValCell>{v}</ValCell></React.Fragment>
            ))}
            <NumCell /><ValCell />
          </Table>
          <BreakLine />
          <OmegaLabel>ω = </OmegaLabel>
          <Unit>·<Frac><FracTop>rad</FracTop><FracBot>s</FracBot></Frac></Unit>
        </Sheet>
        <VScroll>
          <ChevronUp size={20} strokeWidth={3.2} />
          <VThumb />
          <Spacer />
          <ChevronDown size={20} strokeWidth={3.2} />
        </VScroll>
      </Workspace>
      <HScroll>
        <ChevronLeft size={20} strokeWidth={3.2} />
        <HThumb />
        <Spacer />
        <ChevronRight size={20} strokeWidth={3.2} />
      </HScroll>
      <StatusBar>
        <span>For Help, press F1</span>
        <StatusCell $w={56} $first>AUTO</StatusCell>
        <StatusCell $w={46}> </StatusCell>
        <StatusCell $w={54}>NUM</StatusCell>
        <StatusCell $w={60}>Page 5</StatusCell>
      </StatusBar>

      <Taskbar>
        <Wallpaper viewBox="0 0 1920 55" preserveAspectRatio="none">
          <defs>
            <linearGradient id="wl" x1="0" y1="0" x2="1" y2="0">
              <stop offset="0" stopColor="#b4811a" /><stop offset=".7" stopColor="#ad7d10" /><stop offset="1" stopColor="#a45808" />
            </linearGradient>
          </defs>
          <g fillOpacity=".85">
            <polygon points="0,0 948,0 938,55 0,55" fill="url(#wl)" />
            <polygon points="948,0 1058,0 1068,55 938,55" fill="#8b6b21" />
            <polygon points="1058,0 1657,0 1817,55 1068,55" fill="#b59b63" />
            <polygon points="1657,0 1860,0 1860,55 1817,55" fill="#cb911d" />
            <polygon points="1860,0 1920,0 1920,55 1860,55" fill="#ae8533" />
          </g>
        </Wallpaper>
        <StartCell>
          <svg width="44" height="44" viewBox="0 0 44 44"><path d="M0 6l20-3v18H0zM22 3l22-4v22H22zM0 23h20v18L0 38zM22 23h22v21l-22-3z" fill="#fff" /></svg>
        </StartCell>
        <TaskButtons>
          <TaskBtn>
            <Tw>
              <path d="M2 8h14l3 4h23v28H2z" fill="#f0c84a" />
              <path d="M2 14h40v26H2z" fill="#fff2a8" />
              <rect x="8" y="2" width="16" height="8" fill="#fff" stroke="#c8a83c" />
              <rect x="25" y="7" width="16" height="7" fill="#fff" stroke="#c8a83c" />
              <rect x="10" y="4" width="4" height="3" fill="#3a9a3a" /><rect x="27" y="9" width="5" height="3" fill="#3a7ad0" />
              <path d="M6 43V30q0-3 3-3h26q3 0 3 3v13h-8v-7H14v7z" fill="#5ab0dc" />
            </Tw>
          </TaskBtn>
          <TaskBtn $state="plain">
            <Tw w={46} h={46} vb="0 0 46 46">
              <rect width="46" height="46" fill="#0a8a0a" />
              <path d="M14 13h19l2 22-26 2z" fill="#fff" />
              <path d="M16 14c0-11 14-11 14 0" fill="none" stroke="#fff" strokeWidth="1.6" />
              <path d="M16 20h7v6h-7zM25 20h6v6h-6zM16 28h7v5h-7zM25 28h6v5h-6z" fill="#0a8a0a" />
            </Tw>
          </TaskBtn>
          <TaskBtn>
            <Tw>
              <circle cx="22" cy="22" r="22" fill="#1da462" />
              <path d="M22 22L3 11A22 22 0 0 1 42 13H22z" fill="#dd5144" />
              <path d="M22 22h21a22 22 0 0 1-21 22l11-19z" fill="#ffcd46" />
              <circle cx="22" cy="22" r="10.5" fill="#fff" /><circle cx="22" cy="22" r="8.4" fill="#4c8bf5" />
            </Tw>
          </TaskBtn>
          <TaskBtn>
            <Tw>
              <circle cx="22" cy="22" r="22" fill="#1ed760" />
              <path d="M10 15c8-3 17-2 24 2M11 23c7-2 15-1 21 2M13 30c6-2 12-1 17 2" fill="none" stroke="#191414" strokeWidth="4" strokeLinecap="round" />
            </Tw>
          </TaskBtn>
          <TaskBtn $state="active"><MLogo w={48} h={48} /></TaskBtn>
          <TaskBtn>
            <Tw>
              <path d="M18 14h22v20H18z" fill="#fff" stroke="#0a6cc8" strokeWidth="3" />
              <path d="M21 18l8 8 10-10" fill="none" stroke="#0a6cc8" strokeWidth="2.4" />
              <path d="M3 6l22-5v42L3 38z" fill="#0a6cc8" />
              <ellipse cx="14" cy="22" rx="5.5" ry="8" fill="none" stroke="#fff" strokeWidth="4" />
            </Tw>
          </TaskBtn>
          <TaskBtn>
            <Tw>
              <path d="M4 30C-2 16 12 6 24 8c10 2 14 12 6 14-5 1-3 6-1 9 3 6-18 10-25-1z" fill="#cfe4f3" stroke="#7ea8c4" />
              <circle cx="10" cy="23" r="3.5" fill="#d93c3c" /><circle cx="14" cy="15" r="3.2" fill="#3fa84a" /><circle cx="24" cy="14" r="3.2" fill="#e6c030" /><circle cx="17" cy="25" r="3" fill="#888" />
              <path d="M21 43L37 12" stroke="#e78a1c" strokeWidth="2.8" /><path d="M35 12l8-10-2 14z" fill="#c68a4a" />
            </Tw>
          </TaskBtn>
        </TaskButtons>
        <Tray>
          <TrayIcon><Tw w={24} h={24} vb="0 0 24 24"><rect x="9" y="6" width="15" height="13" fill="#fff" stroke="#0a6cc8" /><path d="M11 9l5 5 6-6" fill="none" stroke="#0a6cc8" strokeWidth="1.5" /><path d="M0 4l13-4v24L0 21z" fill="#0a6cc8" /><ellipse cx="6.5" cy="12" rx="2.5" ry="4" fill="none" stroke="#fff" strokeWidth="2" /></Tw></TrayIcon>
          <TrayIcon><Tw w={24} h={26} vb="0 0 24 26"><path d="M2 1v24" stroke="#fff" strokeWidth="1.6" /><path d="M3 2c5 0 7 4 10 4l9 3-6 6c-5 1-9-3-13-2z" fill="#fff" stroke="#666" strokeWidth=".5" /></Tw></TrayIcon>
          <TrayIcon><Tw w={24} h={24} vb="0 0 24 24"><rect width="24" height="24" rx="2" fill="#d01f2e" /><path d="M8 20C4 12 12 4 16 3c2 6-2 11-2 14s-3 2-3-1 4-3 6-1" fill="none" stroke="#fff" strokeWidth="1.8" /></Tw></TrayIcon>
          <TrayIcon><Tw w={16} h={26} vb="0 0 16 26"><rect x="1.5" y="3.5" width="13" height="21" rx="2" fill="none" stroke="#fff" strokeWidth="1.8" /><rect x="5" y="1" width="6" height="3" fill="#fff" /><rect x="3.5" y="14" width="9" height="8" fill="#fff" /><rect x="3.5" y="6" width="9" height="8" fill="#555" /></Tw></TrayIcon>
          <TrayIcon><Tw w={24} h={24} vb="0 0 24 24"><rect width="24" height="24" fill="#8a8a8a" /><text x="12" y="18" fontSize="17" fill="#fff" textAnchor="middle" fontFamily={SANS}>B</text></Tw></TrayIcon>
          <TrayIcon><Tw w={22} h={26} vb="0 0 22 26"><path d="M2 8h4l7-7v24l-7-7H2z" fill="#eee" stroke="#777" strokeWidth=".6" /><path d="M17 9c2 2 2 6 0 8" fill="none" stroke="#eee" strokeWidth="1.4" /></Tw></TrayIcon>
          <TrayIcon><Tw w={24} h={26} vb="0 0 24 26"><rect width="24" height="26" rx="3" fill="#1684c4" stroke="#8fd0ee" /><rect x="5" y="6" width="12" height="9" fill="none" stroke="#d4eef8" /><path d="M16 8h4v6" fill="none" stroke="#fff" /><rect x="2" y="20" width="20" height="4" fill="#f3d45a" /></Tw></TrayIcon>
          <TrayIcon><Tw w={22} h={20} vb="0 0 22 20"><path d="M0 19h3v-4H0zM5 19h3v-8H5zM10 19h3V8h-3zM15 19h3V4h-3zM20 19h2V0h-2z" fill="#f3f3f3" stroke="#777" strokeWidth=".5" /></Tw></TrayIcon>
          <TrayIcon><Tw w={18} h={26} vb="0 0 18 26"><ellipse cx="9" cy="13" rx="9" ry="13" fill="#0d3a82" /><path d="M4 8l10 10-5 5V3l5 5L4 18" fill="none" stroke="#fff" strokeWidth="1.7" /></Tw></TrayIcon>
          <TrayIcon><Tw w={24} h={24} vb="0 0 24 24"><rect width="24" height="24" rx="2" fill="#4cae3c" stroke="#a0d88f" /><path d="M12 3c3 2 6 2 7 2 0 8-2 13-7 16-5-3-7-8-7-16 1 0 4 0 7-2z" fill="#f0f0e0" /><path d="M12 3v18M5 11h14" stroke="#4cae3c" strokeWidth="2" /></Tw></TrayIcon>
          <TrayIcon><Tw w={24} h={24} vb="0 0 24 24"><rect width="24" height="24" fill="#2a2a2a" /><text x="12" y="11" fontSize="10" fill="#bbb" textAnchor="middle" fontFamily={SANS}>B&amp;</text><text x="12" y="21" fontSize="10" fill="#bbb" textAnchor="middle" fontFamily={SANS}>O</text></Tw></TrayIcon>
          <TrayIcon><Tw w={24} h={24} vb="0 0 44 44"><circle cx="22" cy="22" r="22" fill="#1ed760" /><path d="M10 15c8-3 17-2 24 2M11 23c7-2 15-1 21 2M13 30c6-2 12-1 17 2" fill="none" stroke="#191414" strokeWidth="4.4" strokeLinecap="round" /></Tw></TrayIcon>
          <Clock>15:25<br />04/11/2016</Clock>
          <Ghost>η</Ghost>
        </Tray>
      </Taskbar>

      <Palette $x={1209} $y={159} $w={204} $h={306} $z={3}>
        <PalHead><PalTitle $ml={42}>Calculator</PalTitle><PalClose $mr={2}><CloseX /></PalClose></PalHead>
        <PalBody $cols="repeat(5, 34.5px)" $pad="3px 0 0 1px">
          {calcCells.map((c, i) => <Cell key={i}>{c}</Cell>)}
        </PalBody>
      </Palette>
      <Palette $x={1400} $y={539} $w={297} $h={134} $z={3}>
        <PalHead><PalTitle $ml={64}>Modifier</PalTitle><PalClose $mr={2}><CloseX /></PalClose></PalHead>
        <PalBody $cols="112px 112px" $pad="2px 3px 0 0" $end>
          <Cell>real</Cell><Cell>RealRange</Cell><Cell>fully</Cell>
        </PalBody>
      </Palette>
      <Palette $x={1368} $y={800} $w={225} $h={237} $z={3}>
        <PalHead><PalTitle $ml={21}>Programming</PalTitle><PalClose $mr={2}><CloseX /></PalClose></PalHead>
        <PalBody $cols="98px 98px" $pad="2px 0 0 1px">
          {progCells.map((c, i) => <Cell key={i}>{c}</Cell>)}
        </PalBody>
      </Palette>
      <Palette $x={1221} $y={450} $w={237} $h={375} $z={4}>
        <PalHead><PalTitle $ml={78}>Greek</PalTitle><PalClose $mr={1}><CloseX /></PalClose></PalHead>
        <PalBody $cols="repeat(6, 34.6px)" $pad="3px 0 0 0">
          {greekLow.map((c, i) => <GreekLow key={i}>{c}</GreekLow>)}
          {greekUp.map((c, i) => <GreekUp key={i}>{c}</GreekUp>)}
        </PalBody>
      </Palette>
    </Desktop>
  );
}
